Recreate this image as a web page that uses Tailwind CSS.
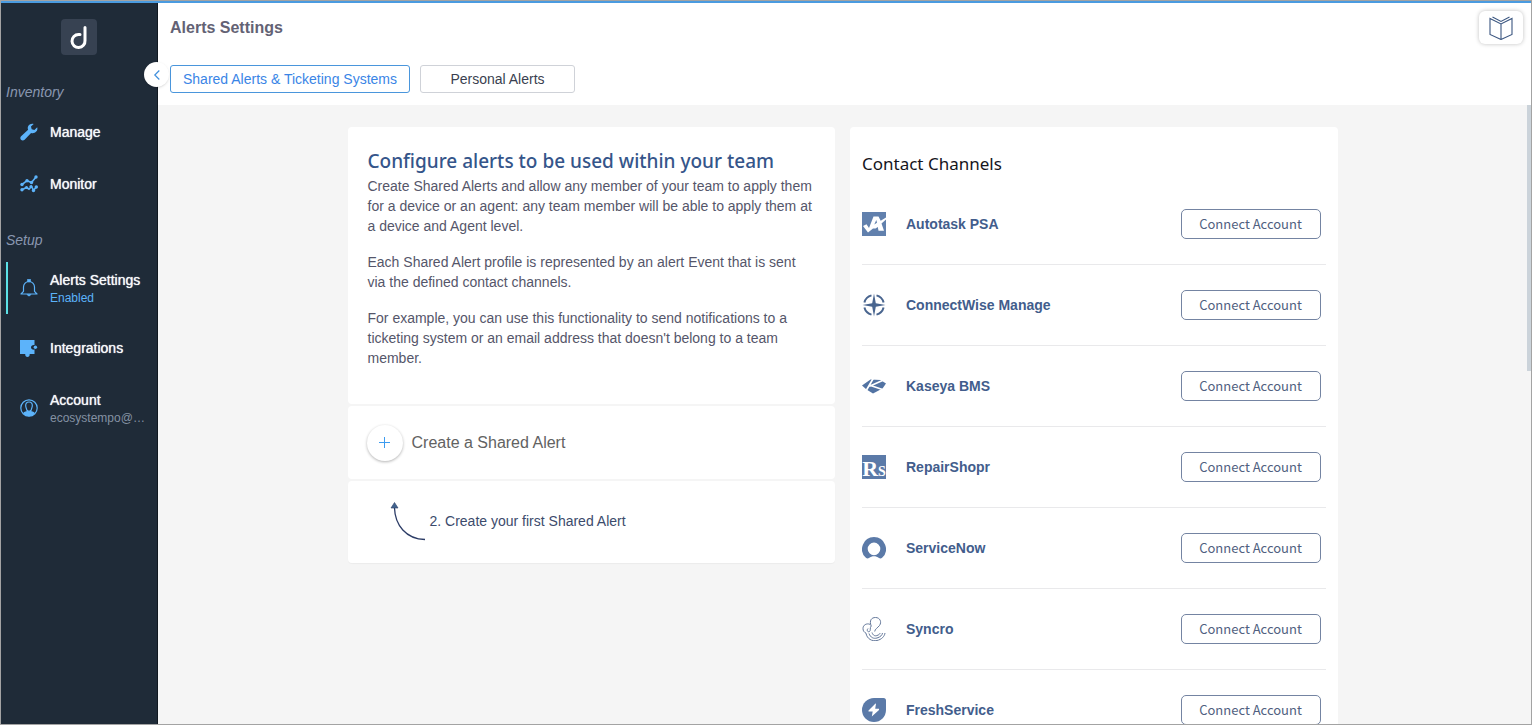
<!DOCTYPE html>
<html lang="en">
<head>
<meta charset="utf-8">
<meta name="viewport" content="width=device-width, initial-scale=1">
<title>Alerts Settings</title>
<script src="https://cdn.jsdelivr.net/npm/@tailwindcss/browser@4"></script>
</head>
<body class="flex h-screen overflow-hidden border border-[#a3a3a3] font-['Liberation_Sans',Arial,sans-serif] text-sm text-[#55566a]">
<div class="flex min-w-0 flex-1 border-t-2 border-[#4a9be0] bg-white">

  <aside class="relative w-[157px] shrink-0 border-r border-[#101820] bg-[#1f2b38]">
    <a href="#" aria-label="Home" class="mx-auto mt-4 flex size-9 items-center justify-center rounded-sm bg-[#374252]">
      <svg class="size-9" viewBox="0 0 36 36" fill="none" stroke="#fff" stroke-width="3" stroke-linecap="round"><path d="M24 8.500V21.500A6.500 6.500 0 1 1 17.500 15.500H19"/></svg>
    </a>
    <h2 class="mt-[27px] pl-[5px] leading-5 text-[#8a97b0] italic">Inventory</h2>
    <ul class="mt-1">
      <li><a href="#" class="flex h-13 items-center pl-[19px] text-[#f7fafc]">
        <svg class="mr-3 size-[18px]" viewBox="0 0 18 18" fill="#5cb3fa"><path d="M17.200 4.200 14.400 7 11.700 6.300 11 3.600 13.700.9C11.600.300 9.500 1 8.400 2.800 7.600 4.100 7.600 5.500 8.100 6.800L1.100 13.200C.1 14.200.1 15.700 1 16.700 2 17.700 3.600 17.600 4.600 16.700L11.100 9.900C12.900 10.500 14.900 10 16.200 8.600 17.400 7.400 17.700 5.700 17.200 4.200Z"/></svg>
        <span class="[text-shadow:0_0_1px_#fff]">Manage</span></a></li>
      <li><a href="#" class="flex h-13 items-center pl-[19px] text-[#f7fafc]">
        <svg class="mr-3 size-[18px]" viewBox="0 0 18 18" fill="none" stroke="#5cb3fa" stroke-width="1.600"><path d="M2 9.500 7 5.700 11.500 7.500 16 2M2 14.700 6.500 12.500 9 14.200 11.500 11.500 13.500 15.300 16.300 12"/><g fill="#5cb3fa" stroke="none"><circle cx="2" cy="9.500" r="1.700"/><circle cx="7" cy="5.700" r="1.700"/><circle cx="11.500" cy="7.500" r="1.700"/><circle cx="16" cy="2" r="1.700"/><circle cx="2" cy="14.700" r="1.700"/><circle cx="6.500" cy="12.500" r="1.600"/><circle cx="11" cy="11.500" r="1.600"/><circle cx="13.500" cy="15.500" r="1.700"/><circle cx="16.300" cy="12" r="1.700"/></g></svg>
        <span class="[text-shadow:0_0_1px_#fff]">Monitor</span></a></li>
    </ul>
    <h2 class="mt-5 pl-[5px] leading-5 text-[#8a97b0] italic">Setup</h2>
    <ul class="mt-3 flex flex-col gap-2">
      <li><a href="#" aria-current="page" class="ml-[5px] flex h-13 items-center border-l-2 border-[#5ce1e6] pl-3 text-[#f7fafc]">
        <svg class="mr-3 size-[18px]" viewBox="0 0 18 18" fill="none" stroke="#5cb3fa" stroke-width="1.200" stroke-linejoin="round"><path d="M1 15H17L14.500 12.300V8A5.500 5.500 0 0 0 3.500 8V12.300Z"/><path d="M7.500.200H10.500V3H7.500ZM7 15.500H11L9.500 17H8.500Z" fill="#5cb3fa" stroke-width=".600"/></svg>
        <span class="flex flex-col pt-[2px]"><span class="leading-[18px] [text-shadow:0_0_1px_#fff]">Alerts Settings</span><span class="text-xs leading-[18px] text-[#5cb3fa]">Enabled</span></span></a></li>
      <li><a href="#" class="flex h-13 items-center pl-[19px] text-[#f7fafc]">
        <svg class="mr-3 size-[18px]" viewBox="0 0 18 18" fill="#5cb3fa"><path d="M0 1H14.500V6C12.500 5.600 11 6.700 11 8.300S12.500 11 14.500 10.600V15H9.700C9.700 17.200 8.900 18 7.500 18S5.200 17.200 5.200 15H0Z"/><circle cx="15.400" cy="8.300" r="1.700"/></svg>
        <span class="[text-shadow:0_0_1px_#fff]">Integrations</span></a></li>
      <li><a href="#" class="flex h-13 items-center pl-[19px] text-[#f7fafc]">
        <svg class="mr-3 size-[18px]" viewBox="0 0 18 18" fill="none" stroke="#5cb3fa" stroke-width="1.200"><circle cx="9" cy="9" r="8.200"/><path d="M9 3C6.500 3 5.500 4.800 5.700 7 5.900 9 7 10.800 7 11.400L9 12.500 11 11.400C11 10.800 12.100 9 12.300 7 12.500 4.800 11.500 3 9 3Z"/><path d="M3 14.200C4.500 12.200 6.500 12.700 7.200 11.500L9 12.500 10.800 11.500C11.500 12.700 13.500 12.200 15 14.200 12 18.200 6 18.200 3 14.200Z" fill="#5cb3fa" stroke="none"/></svg>
        <span class="flex min-w-0 flex-col pt-[2px]"><span class="leading-[18px] [text-shadow:0_0_1px_#fff]">Account</span><span class="text-xs leading-[18px] text-[#8491a3]">ecosystempo@…</span></span></a></li>
    </ul>
    <button type="button" aria-label="Collapse sidebar" class="absolute top-[59px] -right-3 flex size-[25px] items-center justify-center rounded-full bg-white shadow">
      <svg class="size-3" viewBox="0 0 12 12" fill="none" stroke="#3f8fdd" stroke-width="1.200"><path d="M8.300 1.500 3.800 6 8.300 10.500"/></svg>
    </button>
  </aside>

  <div class="flex min-w-0 flex-1 flex-col">
    <header class="flex shrink-0 items-start justify-between pr-2 pb-3 pl-3">
      <div>
        <h1 class="mt-[15px] text-base leading-5 font-bold text-[#636274]">Alerts Settings</h1>
        <nav class="mt-[27px] flex gap-[10px]">
          <button type="button" class="h-7 w-60 rounded-[3px] border border-[#4a96dc] text-[#3a85e6]">Shared Alerts &amp; Ticketing Systems</button>
          <button type="button" class="h-7 w-[155px] rounded-[3px] border border-[#cfd2d8] text-[#3a3f50]">Personal Alerts</button>
        </nav>
      </div>
      <button type="button" aria-label="Documentation" class="mt-2 flex h-[33px] w-11 items-center justify-center rounded-md bg-white shadow-[0_0_4px_rgba(0,0,0,0.25)]">
        <svg class="size-6" viewBox="0 0 24 24" fill="none" stroke="#3b5680" stroke-width="1.100"><path d="M1 2.500 12 8 23 2.500V18.500L12 23.500 1 18.500ZM12 8V23.500M3.500 1 12 5.500 20.500 1"/></svg>
      </button>
    </header>

    <div class="flex min-h-0 flex-1 bg-[#f5f5f5]">
      <main class="min-w-0 flex-1 overflow-hidden pt-[22px]">
        <div class="mx-auto grid max-w-[990px] grid-cols-2 items-start gap-[15px]">
          <div class="flex flex-col gap-[2px]">
            <section class="rounded bg-white px-5 pt-5 pb-9">
              <h2 class="font-['Noto_Sans',sans-serif] text-[19px] leading-7 font-medium text-[#35558a]">Configure alerts to be used within your team</h2>
              <div class="mt-px flex flex-col gap-4 leading-5">
                <p>Create Shared Alerts and allow any member of your team to apply them for a device or an agent: any team member will be able to apply them at a device and Agent level.</p>
                <p>Each Shared Alert profile is represented by an alert Event that is sent via the defined contact channels.</p>
                <p>For example, you can use this functionality to send notifications to a ticketing system or an email address that doesn't belong to a team member.</p>
              </div>
            </section>
            <section class="flex h-[73px] items-center rounded bg-white px-[19px]">
              <button type="button" class="flex items-center gap-[9px] text-base text-[#626262]">
                <span class="flex size-9 items-center justify-center rounded-full shadow-[0_1px_3px_rgba(0,0,0,0.3)]">
                  <svg class="size-3" viewBox="0 0 12 12" fill="none" stroke="#3d9cf0" stroke-width="1"><path d="M5.500 0V11M0 5.500H11"/></svg>
                </span>
                Create a Shared Alert
              </button>
            </section>
            <section class="flex h-[82px] items-center rounded bg-white pb-[2px] pl-[42px] text-[#3c4b6c] shadow-[0_1px_1px_rgba(0,0,0,0.04)]">
              <svg class="mr-1 h-10 w-9" viewBox="0 0 36 40" fill="none" stroke="#2c3c66" stroke-width="1.300"><path d="M4.500 7C5 24 16 38 35 38.500"/><path d="M4.500 1.500 8 7H1Z" fill="#41648f" stroke-width=".600"/></svg>
              <p>2. Create your first Shared Alert</p>
            </section>
          </div>

          <section class="rounded bg-white pr-3 pb-3 pl-3">
            <h2 class="pt-[23px] pb-[6px] font-['Noto_Sans',sans-serif] text-[17px] leading-7 text-[#15151c]">Contact Channels</h2>
            <ul class="divide-y divide-[#e9e9eb] font-bold text-[#425d8c]">
              <li class="flex items-center py-[25px] pr-[5px]">
                <svg class="size-6" viewBox="0 0 24 24"><path fill="#6180ad" d="M0 0H24V24H0Z"/><path fill="#fff" d="M1 14 4.500 12.300 7 16 11.500 4.500H16.500L18.700 8.700 24 5.500V7.500L19.500 11.500 22 18.800H16.500L15.800 15 13.500 16.500H11L6 20.500ZM12.300 12.500 15 10.700 14.300 8Z" fill-rule="evenodd"/></svg>
                <span class="ml-5 flex-1">Autotask PSA</span>
                <button type="button" class="h-[30px] w-35 rounded-[5px] border border-[#7484a2] font-['Noto_Sans_CJK_SC',sans-serif] text-[13px] font-normal text-[#505f80]">Connect Account</button>
              </li>
              <li class="flex items-center py-[25px] pr-[5px]">
                <svg class="size-6" viewBox="0 0 24 24" fill="none" stroke="#49658f" stroke-width="2"><path d="M14.500 2.400A10 10 0 0 1 21.600 9.500M21.600 14.500A10 10 0 0 1 14.500 21.600M9.500 21.600A10 10 0 0 1 2.400 14.500M2.400 9.500A10 10 0 0 1 9.500 2.400"/><path fill="#49658f" stroke="none" d="M12 .5 13.800 10.200 23.500 12 13.800 13.800 12 23.500 10.200 13.800.5 12 10.200 10.200Z"/></svg>
                <span class="ml-5 flex-1">ConnectWise Manage</span>
                <button type="button" class="h-[30px] w-35 rounded-[5px] border border-[#7484a2] font-['Noto_Sans_CJK_SC',sans-serif] text-[13px] font-normal text-[#505f80]">Connect Account</button>
              </li>
              <li class="flex items-center py-[25px] pr-[5px]">
                <svg class="size-6" viewBox="0 0 24 24"><path fill="#5273a3" d="M0 11.500 8.500 5.500 18.500 6 24 9.500 20.500 14.500 11 19.500 4.500 15.500Z"/><path stroke="#fff" stroke-width="1.700" fill="none" d="M11.500 4 4.500 16M20.500 6.500 7.500 12.200M8.500 11.500 20.500 15.500"/></svg>
                <span class="ml-5 flex-1">Kaseya BMS</span>
                <button type="button" class="h-[30px] w-35 rounded-[5px] border border-[#7484a2] font-['Noto_Sans_CJK_SC',sans-serif] text-[13px] font-normal text-[#505f80]">Connect Account</button>
              </li>
              <li class="flex items-center py-[25px] pr-[5px]">
                <span class="flex size-6 items-baseline justify-center bg-[#5b7aa8] font-['Liberation_Serif',serif] leading-7 text-white"><span class="text-[22px]">R</span><span class="text-sm leading-5">S</span></span>
                <span class="ml-5 flex-1">RepairShopr</span>
                <button type="button" class="h-[30px] w-35 rounded-[5px] border border-[#7484a2] font-['Noto_Sans_CJK_SC',sans-serif] text-[13px] font-normal text-[#505f80]">Connect Account</button>
              </li>
              <li class="flex items-center py-[25px] pr-[5px]">
                <svg class="size-6" viewBox="0 0 24 24" fill="#5b7aa8"><path d="M12 1A12 12 0 0 0 3.900 21.800C4.800 22.600 6 22.700 7 22 10 19.800 14 19.800 17 22 18 22.700 19.200 22.600 20.100 21.800A12 12 0 0 0 12 1ZM12 19.200A6.300 6.300 0 1 1 12 6.600 6.300 6.300 0 0 1 12 19.200Z" fill-rule="evenodd"/></svg>
                <span class="ml-5 flex-1">ServiceNow</span>
                <button type="button" class="h-[30px] w-35 rounded-[5px] border border-[#7484a2] font-['Noto_Sans_CJK_SC',sans-serif] text-[13px] font-normal text-[#505f80]">Connect Account</button>
              </li>
              <li class="flex items-center py-[25px] pr-[5px]">
                <svg class="size-6" viewBox="0 0 24 24" fill="none" stroke="#64789a" stroke-width="1"><path d="M9.200 9C7 3.500 9.500.500 13.500.500 18 .500 20 5 17.500 8.500 15.500 11 13 12 12.700 14.500M9.200 9C7.500 11 9 13.500 7.500 14.500 5.500 15.500 4.500 13 6 11.500M8 7.300C4.500 6 1 8 1 11.500 1 14 2.300 15.300 4 16.200M4 16.200C5 22 10 24.500 15 23.500 19.500 22.500 22.500 19.500 23 16M7 16.500C8.500 20.500 11.500 22 15 21 18.500 20 20.300 18 20.500 16M10 15.500C11 18.500 13 19.300 15 18.500 17 17.800 18 17 18 16"/></svg>
                <span class="ml-5 flex-1">Syncro</span>
                <button type="button" class="h-[30px] w-35 rounded-[5px] border border-[#7484a2] font-['Noto_Sans_CJK_SC',sans-serif] text-[13px] font-normal text-[#505f80]">Connect Account</button>
              </li>
              <li class="flex items-center py-[25px] pr-[5px]">
                <svg class="size-6" viewBox="0 0 24 24"><path fill="#5b7aa8" d="M12 0H21.500Q24 0 24 2.500V12A12 12 0 1 1 12 0Z"/><path fill="#fff" d="M13.500 5.500 6.500 12.500V13.500H10.700L9.800 18.500 17 12V10.800H13.200L14 5.700Z"/></svg>
                <span class="ml-5 flex-1">FreshService</span>
                <button type="button" class="h-[30px] w-35 rounded-[5px] border border-[#7484a2] font-['Noto_Sans_CJK_SC',sans-serif] text-[13px] font-normal text-[#505f80]">Connect Account</button>
              </li>
            </ul>
          </section>
        </div>
      </main>
      <div class="w-1 shrink-0"><div class="h-[43%] bg-[#cbd3da]"></div></div>
    </div>
  </div>
</div>
</body>
</html>
